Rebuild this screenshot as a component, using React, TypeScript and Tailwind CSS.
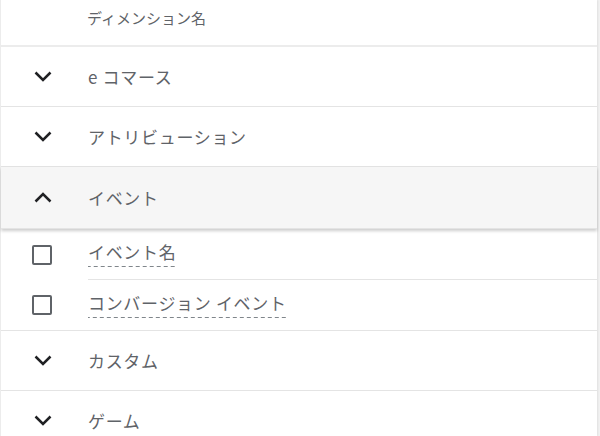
import React from 'react';

const font = { fontFamily: '"Noto Sans CJK JP", "Noto Sans", sans-serif' };

const Chevron = ({ up }: { up?: boolean }) => (
    <svg width="18" height="11" viewBox="0 0 18 11" className="text-[#202124]">
        <path
            d={up ? 'M1.5 9.5 L9 2 L16.5 9.5' : 'M1.5 1.5 L9 9 L16.5 1.5'}
            fill="none"
            stroke="currentColor"
            strokeWidth="2.5"
        />
    </svg>
);

const GroupRow = ({ label, open, h }: { label: string; open?: boolean; h: string }) => (
    <div
        className={`flex items-center border-b border-[#e4e4e4] ${h} ${
            open ? 'relative z-10 bg-[#f6f6f6] shadow-[0_2px_3px_rgba(0,0,0,0.2)]' : 'bg-white'
        }`}
    >
        <div className="flex w-[87px] pl-[33px]">
            <Chevron up={open} />
        </div>
        <span className="text-[17px] tracking-[0.04em] text-[#5f6368]">{label}</span>
    </div>
);

const ItemRow = ({ label, last, h }: { label: string; last?: boolean; h: string }) => (
    <div className={`flex items-center ${h} ${last ? 'border-b border-[#e4e4e4]' : ''}`}>
        <div className="flex w-[87px] pl-[31px]">
            <span className="block h-[20px] w-[20px] rounded-[2px] border-2 border-[#5f6368]" />
        </div>
        <div className={`flex h-full flex-1 items-center ${last ? '' : 'border-b border-[#e4e4e4]'}`}>
            <span className="bg-[linear-gradient(to_right,#80868b_60%,transparent_0)] bg-[length:7px_1.5px] bg-bottom bg-repeat-x pb-[4px] text-[17px] leading-[22px] tracking-[0.04em] text-[#5f6368]">
                {label}
            </span>
        </div>
    </div>
);

export default function App() {
    return (
        <div className="h-[436px] w-[600px] overflow-hidden bg-[#f2f2f2]" style={font}>
            <div className="h-full w-[597px] border-l border-[#ececec] bg-white shadow-[1px_0_2px_rgba(0,0,0,0.08)]">
                <div className="flex h-[47px] items-center border-b-2 border-[#ececec] pl-[86px] pb-[8px]">
                    <span className="text-[15px] text-[#5f6368]">ディメンション名</span>
                </div>
                <GroupRow label="e コマース" h="h-[60px]" />
                <GroupRow label="アトリビューション" h="h-[60px]" />
                <GroupRow label="イベント" open h="h-[62px]" />
                <ItemRow label="イベント名" h="h-[51px]" />
                <ItemRow label="コンバージョン イベント" last h="h-[51px]" />
                <GroupRow label="カスタム" h="h-[60px]" />
                <GroupRow label="ゲーム" h="h-[60px]" />
            </div>
        </div>
    );
}
